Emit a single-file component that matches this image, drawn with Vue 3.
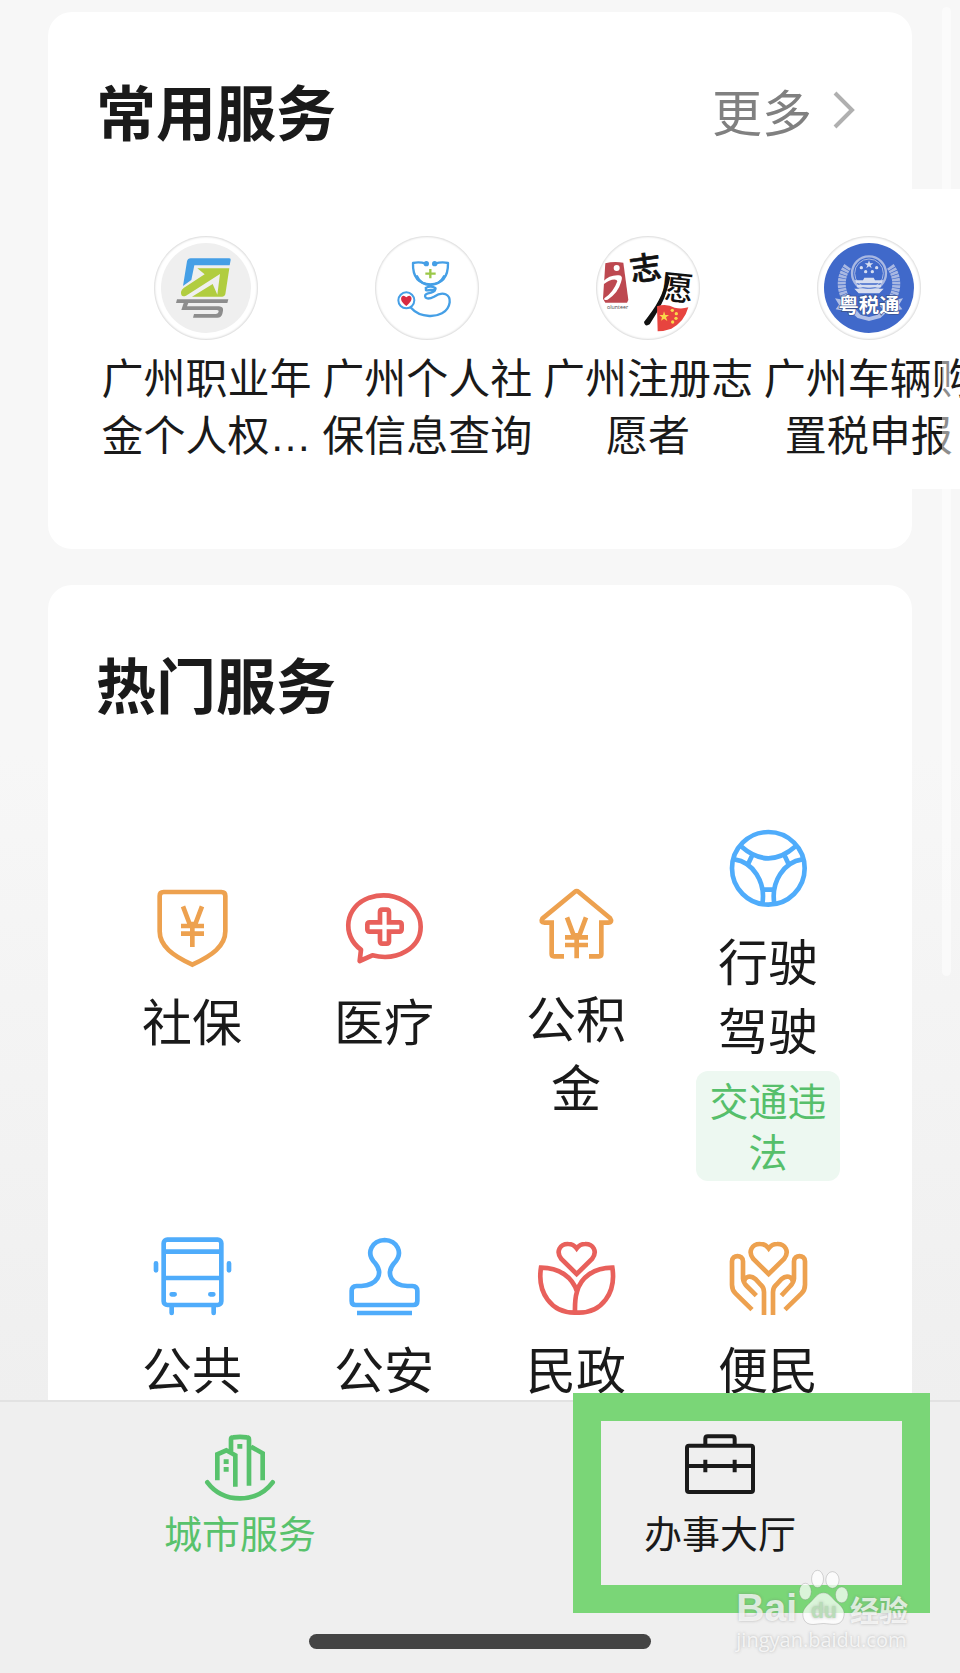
<script setup>
const services = [
  {
    name: '广州职业年金个人权…',
    box: '222 48 312 312',
    art: `
      <circle cx="378" cy="204" r="135" fill="#efefef"/>
      <path d="M309 198L321 124Q323 115 332 115H448Q453 115 452 120L449 136H343L334 180Z" fill="#459fe6"/>
      <path d="M352 145H448L436 223Q434 230 427 230H336L398 192L412 224L420 162L318 227Q302 233 303 216Q304 208 312 203L374 163Z" fill="#b1cd3f"/>
      <path d="M291 238H445L442 249H325L321 259H417Q431 260 429 272L427 282Q424 293 412 293H339L342 282H408Q415 281 416 275Q417 270 411 270H304L311 249H288Z" fill="#8d8d8d"/>`
  },
  {
    name: '广州个人社保信息查询',
    box: '885 48 312 312',
    art: `
      <g fill="none" stroke="#459fe6" stroke-width="7" stroke-linecap="round" stroke-linejoin="round">
        <path d="M1037 131Q1018 124 999 129Q997 191 1051 193Q1105 191 1104 129Q1085 124 1065 131"/>
        <path d="M1011 169Q1022 194 1051 195Q1080 194 1092 169"/>
        <path d="M1037 204Q1052 196 1066 204Q1070 210 1052 210Q1035 213 1038 208M1066 208Q1064 218 1044 220Q1031 224 1037 233Q1045 239 1062 230C1090 211 1111 224 1109 247C1105 279 1072 289 1048 288C1020 286 1004 276 993 263"/>
      </g>
      <circle cx="1039" cy="131" r="8" fill="#459fe6"/><circle cx="1064" cy="131" r="8" fill="#459fe6"/>
      <path d="M1051 147V175M1036 161H1067" stroke="#9bc848" stroke-width="7"/>
      <circle cx="979" cy="241" r="24" fill="#fff" stroke="#459fe6" stroke-width="6"/>
      <path d="M979 258C966 248 960 238 965 230Q971 223 979 232Q987 223 993 230C998 238 991 248 979 258Z" fill="#d82b43"/>`
  },
  {
    name: '广州注册志愿者',
    box: '105 48 312 312',
    art: `
      <path d="M133 130Q158 123 187 128L202 240L198 248H133L126 236Z" fill="#bd4850"/>
      <circle cx="167" cy="144" r="9" fill="#fff"/>
      <path d="M127 184Q145 164 174 166Q188 167 180 187Q171 220 140 239Q126 243 130 235Q158 216 169 184Q168 176 153 179Q135 185 128 193Z" fill="#fff"/>
      <text x="138" y="267" font-size="16" fill="#444" font-family="Open Sans, sans-serif">olunteer</text>
      <text x="206" y="178" font-size="94" font-weight="500" fill="#111" stroke="#111" stroke-width="2" transform="rotate(-8 253 140)" font-family="Noto Sans CJK SC, sans-serif">志</text>
      <text x="298" y="240" font-size="100" font-weight="500" fill="#111" transform="rotate(6 346 200)" font-family="Noto Sans CJK SC, sans-serif">愿</text>
      <path d="M318 165C308 228 284 260 249 306Q252 322 266 313C292 274 315 234 328 172Z" fill="#111"/>
      <path d="M288 259Q316 250 341 263Q362 268 382 262Q370 306 331 326Q308 334 290 334Z" fill="#e7443f"/>
      <path d="M309 274L313 285L324 285L315 292L319 303L309 296L300 302L303 292L295 285H306Z" fill="#f9d84a"/>
      <g fill="#f9d84a"><circle cx="334" cy="271" r="5"/><circle cx="346" cy="281" r="5"/><circle cx="345" cy="295" r="5"/><circle cx="335" cy="306" r="5"/></g>`
  },
  {
    name: '广州车辆购置税申报',
    box: '768 48 312 312',
    art: `
      <circle cx="924" cy="204" r="135" fill="#4069ca"/>
      <g fill="none" stroke="#a9b8e2">
        <path d="M860 139C830 180 838 234 884 268M988 139C1018 180 1010 234 964 268" stroke-width="24" stroke-dasharray="8 2"/>
        <circle cx="924" cy="160" r="51" stroke-width="7"/>
        <circle cx="924" cy="160" r="43" stroke-width="3"/>
      </g>
      <g fill="#d7def1">
        <path d="M924 121L927 130H937L929 136L932 145L924 139L916 145L919 136L911 130H921Z"/>
        <circle cx="901" cy="143" r="5"/><circle cx="947" cy="143" r="5"/><circle cx="914" cy="155" r="5"/><circle cx="934" cy="155" r="5"/>
        <path d="M910 173H938L942 181H967L962 190H886L881 181H906ZM888 194H960V202H888ZM880 206H968L955 220H893Z"/>
        <path d="M822 235L850 240V262L886 270L898 284L924 291L950 284L962 270L998 262V240L1026 235L1014 254L1024 268L978 276L958 294L924 303L890 294L870 276L824 268L834 254Z" opacity=".75"/>
      </g>
      <text x="924" y="279" font-size="61" font-weight="700" fill="#fff" stroke="#39508c" stroke-width="4" paint-order="stroke" text-anchor="middle" font-family="Noto Sans CJK SC, sans-serif">粤税通</text>`
  }
]

const categories = [
  {
    name: '社保',
    tone: 'orange',
    box: '96 84 240 240',
    art: `
      <path d="M131 96H304Q316 96 316 108V214C316 258 276 287 217 314C158 287 119 258 119 214V108Q119 96 131 96Z"/>
      <path d="M189 139L209 192H226L246 139M217 192V261M183 198H252M183 221H252"/>`
  },
  {
    name: '医疗',
    tone: 'red',
    box: '672 84 240 240',
    art: `
      <path d="M723 269C664 226 674 139 748 113C822 89 902 134 902 200C902 263 833 305 757 286L719 303Z" stroke-linejoin="round"/>
      <path d="M787 149H800Q807 149 807 156V187H838Q845 187 845 194V208Q845 215 838 215H807V244Q807 251 800 251H787Q780 251 780 244V215H749Q742 215 742 208V194Q742 187 749 187H780V156Q780 149 787 149Z"/>`
  },
  {
    name: '公积金',
    tone: 'orange',
    box: '108 228 240 240',
    art: `
      <path d="M192 442H162Q155 442 155 435V341H134Q120 340 127 329L224 249Q230 244 236 249L330 327Q339 340 324 341H304V435Q304 442 297 442H267"/>
      <path d="M201 325L221 379H238L258 325M230 379V448M195 385H264M195 408H264"/>`
  },
  {
    name: '行驶驾驶',
    tone: 'blue',
    box: '684 54 240 240',
    art: `
      <circle cx="805" cy="175" r="109"/>
      <path d="M723 109Q805 181 887 109M703 148C758 156 798 214 787 282M907 148C852 156 812 214 823 282M756 137L744 163M854 137L866 163M791 239H819"/>`,
    tag: '交通违法'
  },
  {
    name: '公共',
    tone: 'blue',
    box: '96 48 240 240',
    art: `
      <rect x="131" y="59" width="173" height="196" rx="11"/>
      <path d="M131 95H304M131 174H304"/>
      <path d="M108 130V151M327 130V151M155 260V279M281 260V279M155 223H164M271 223H280" stroke-linecap="round"/>`
  },
  {
    name: '公安',
    tone: 'blue',
    box: '672 48 240 240',
    art: `
      <path d="M766 130C734 98 758 61 794 60C830 61 853 98 822 130C796 162 814 195 862 198H877Q892 199 892 212V243Q892 255 880 255H707Q695 255 695 243V212Q695 199 710 198H724C772 195 791 162 766 130Z"/>
      <path d="M711 279H876"/>`
  },
  {
    name: '民政',
    tone: 'red',
    box: '108 48 240 240',
    art: `
      <path d="M230 162L184 117C166 94 181 71 205 72Q220 72 230 85Q240 72 255 72C279 71 294 94 276 117Z"/>
      <path d="M225 278C154 279 111 218 123 143C178 143 218 172 231 215C242 172 282 143 337 143C349 218 306 279 235 278H225Q224 237 231 215"/>`
  },
  {
    name: '便民',
    tone: 'orange',
    box: '684 48 240 240',
    art: `
      <path d="M806 162L760 117C742 94 757 71 781 72Q796 72 806 85Q816 72 831 72C855 71 870 94 852 117Z"/>
      <path d="M756 269L707 221Q696 210 696 194V124C696 103 729 103 729 124V176Q730 188 740 198L769 227M732 186C734 168 753 165 766 177L783 195Q792 203 792 216V285"/>
      <path d="M855 269L904 221Q915 210 915 194V124C915 103 882 103 882 124V176Q881 188 871 198L844 227M879 186C877 168 858 165 845 177L828 195Q819 203 819 216V285"/>`
  }
]

const tabs = [
  {
    name: '城市服务',
    active: true,
    box: '192 126 216 216',
    art: `
      <path d="M202 277Q238 325 300 325Q362 325 398 277" stroke-width="14" stroke-linecap="round"/>
      <path d="M232 271V193L259 181L286 196V290M273 184V148Q273 142 280 142Q300 139 320 142Q327 142 327 149V287M333 170L368 190V271" stroke-width="14"/>
      <path d="M292 169H307M251 215H266M251 238H266" stroke-width="14"/>`
  },
  {
    name: '办事大厅',
    active: false,
    box: '372 156 216 216',
    art: `
      <rect x="381" y="197" width="198" height="139" rx="6" stroke-width="12"/>
      <path d="M436 197V176Q436 169 443 169H517Q524 169 524 176V197M381 258H579M436 239V277M524 239V277" stroke-width="12"/>`
  }
]
</script>

<template>
  <div class="app">
    <main class="content">
      <section class="card">
        <header class="card-head">
          <h2>常用服务</h2>
          <a class="more" href="#">
            更多
            <svg viewBox="0 0 24 40" aria-hidden="true"><path d="M3 3L20 20L3 37" /></svg>
          </a>
        </header>
        <div class="strip">
          <a v-for="s in services" :key="s.name" class="service" href="#">
            <span class="avatar"><svg :viewBox="s.box" aria-hidden="true" v-html="s.art"></svg></span>
            <span class="service-name">{{ s.name }}</span>
          </a>
        </div>
      </section>

      <section class="card">
        <header class="card-head">
          <h2>热门服务</h2>
        </header>
        <div class="grid">
          <a
            v-for="c in categories"
            :key="c.name"
            class="category"
            :class="{ short: c.name.length < 3, tagged: c.tag }"
            href="#"
          >
            <svg class="category-icon" :class="c.tone" :viewBox="c.box" aria-hidden="true" v-html="c.art"></svg>
            <span class="category-name">{{ c.name }}</span>
            <span v-if="c.tag" class="tag">{{ c.tag }}</span>
          </a>
        </div>
      </section>
      <div class="scrollbar"></div>
    </main>

    <nav class="tabbar">
      <div class="tabs">
        <button v-for="t in tabs" :key="t.name" type="button" class="tab" :class="{ active: t.active }">
          <svg :viewBox="t.box" aria-hidden="true" v-html="t.art"></svg>
          <span>{{ t.name }}</span>
        </button>
      </div>
      <div class="home-indicator"></div>
      <div class="highlight"></div>
      <div class="watermark">
        <div class="brand">
          <span class="bai">Bai</span>
          <svg viewBox="700 565 160 175" aria-hidden="true">
            <ellipse cx="725" cy="636" rx="18" ry="25" />
            <ellipse cx="762" cy="598" rx="18" ry="26" />
            <ellipse cx="807" cy="601" rx="20" ry="25" />
            <ellipse cx="835" cy="646" rx="19" ry="24" />
            <path d="M780 640C798 640 804 655 818 667C836 681 846 694 841 713C835 737 813 736 798 734Q780 731 762 734C746 737 725 737 719 715C713 694 727 681 741 668C755 655 762 640 780 640Z" />
            <text x="781" y="716" text-anchor="middle">du</text>
          </svg>
          <span class="jingyan">经验</span>
        </div>
        <div class="site">jingyan.baidu.com</div>
      </div>
    </nav>
  </div>
</template>

<style>
body {
  background: #efefef;
}
</style>

<style scoped>
.app {
  display: flex;
  flex-direction: column;
  height: 100vh;
  overflow: hidden;
  color: #1a1a1a;
  background: linear-gradient(#f7f7f7 0%, #f7f7f7 45%, #efefef 84%);
  font-family: "Noto Sans CJK SC", sans-serif;
}

a {
  color: inherit;
  text-decoration: none;
}

.content {
  position: relative;
  flex: 1;
  min-height: 0;
  overflow: hidden;
  padding: 12px 48px 0;
}

.card {
  margin-bottom: 36px;
  padding: 64px 48px 60px;
  border-radius: 24px;
  background: #fff;
}

.card-head {
  display: flex;
  align-items: center;
  justify-content: space-between;
}

h2 {
  margin: 0;
  font-size: 60px;
  line-height: 68px;
  font-weight: 700;
}

.more {
  display: flex;
  align-items: center;
  gap: 20px;
  margin-right: 8px;
  color: #808080;
  font-size: 50px;
  line-height: 68px;
}

.more svg {
  width: 24px;
  height: 40px;
  fill: none;
  stroke: #b0b0b0;
  stroke-width: 4;
}

.strip {
  display: flex;
  margin: 45px -96px 0 0;
  padding: 47px 0 24px;
  overflow: hidden;
  background: #fff;
}

.service {
  display: flex;
  flex: none;
  flex-direction: column;
  align-items: center;
  gap: 11px;
  width: 23vw;
}

.avatar {
  box-sizing: border-box;
  width: 104px;
  height: 104px;
  border-radius: 50%;
  box-shadow: inset 0 0 2px 1px #dadada;
}

.avatar svg {
  display: block;
  width: 104px;
  height: 104px;
}

.service-name {
  width: 212px;
  font-family: "Liberation Sans", "Noto Sans CJK SC", sans-serif;
  font-size: 42px;
  line-height: 57px;
  text-align: center;
}

.grid {
  display: grid;
  grid-template-columns: repeat(4, 1fr);
  align-items: center;
  row-gap: 55px;
  margin-top: 111px;
}

.category {
  display: flex;
  flex-direction: column;
  align-items: center;
  padding-bottom: 4px;
}

.category.short {
  padding-bottom: 67px;
}

.category.tagged {
  padding-bottom: 0;
}

.category-icon {
  width: 80px;
  height: 80px;
  margin-bottom: 17px;
  fill: none;
  stroke: currentColor;
  stroke-width: 14;
}

.orange {
  color: #eda14f;
}

.red {
  color: #e8605b;
}

.blue {
  color: #4facfb;
}

.category-name {
  width: 75%;
  font-size: 50px;
  line-height: 69px;
  text-align: center;
}

.tag {
  box-sizing: border-box;
  width: 75%;
  margin-top: 8px;
  padding: 3px 12px 5px;
  border-radius: 12px;
  color: #56bf6b;
  background: #edf8f1;
  font-size: 39px;
  line-height: 51px;
  text-align: center;
}

.scrollbar {
  position: absolute;
  top: 7px;
  right: 9px;
  width: 9px;
  height: 969px;
  border-radius: 5px;
  background: rgba(255, 255, 255, 0.5);
}

.tabbar {
  position: relative;
  flex: none;
  padding-bottom: 24px;
  border-top: 2px solid #e2e2e2;
  background: #efefef;
}

.tabs {
  display: flex;
  padding: 30px 0 76px;
}

.tab {
  display: flex;
  flex: 1;
  flex-direction: column;
  align-items: center;
  gap: 2px;
  padding: 0;
  border: 0;
  color: #1a1a1a;
  background: none;
  font-family: inherit;
  font-size: 38px;
  line-height: 52px;
}

.tab.active {
  color: #58c26c;
}

.tab svg {
  width: 72px;
  height: 72px;
  fill: none;
  stroke: currentColor;
}

.home-indicator {
  width: 342px;
  height: 15px;
  margin: 0 auto;
  border-radius: 8px;
  background: #444;
}

.highlight {
  box-sizing: border-box;
  position: absolute;
  right: 30px;
  bottom: 60px;
  width: 357px;
  height: 220px;
  border: 28px solid #7ad677;
}

.watermark {
  position: absolute;
  right: 52px;
  bottom: 19px;
  color: rgba(255, 255, 255, 0.75);
  text-shadow: 0 0 3px rgba(110, 110, 110, 0.45);
}

.brand {
  display: flex;
  align-items: flex-end;
  justify-content: space-between;
}

.bai {
  font-family: "Liberation Sans", sans-serif;
  font-size: 39px;
  line-height: 36px;
  font-weight: 700;
}

.brand svg {
  width: 53px;
  height: 58px;
  fill: rgba(255, 255, 255, 0.72);
  stroke: rgba(120, 120, 120, 0.3);
  stroke-width: 3;
}

.brand text {
  fill: #b9dcb8;
  stroke: none;
  font-family: "Liberation Sans", sans-serif;
  font-size: 64px;
  font-weight: 700;
}

.jingyan {
  font-size: 29px;
  line-height: 34px;
  font-weight: 700;
}

.site {
  font-family: "Open Sans", sans-serif;
  font-size: 20px;
  line-height: 28px;
}
</style>
